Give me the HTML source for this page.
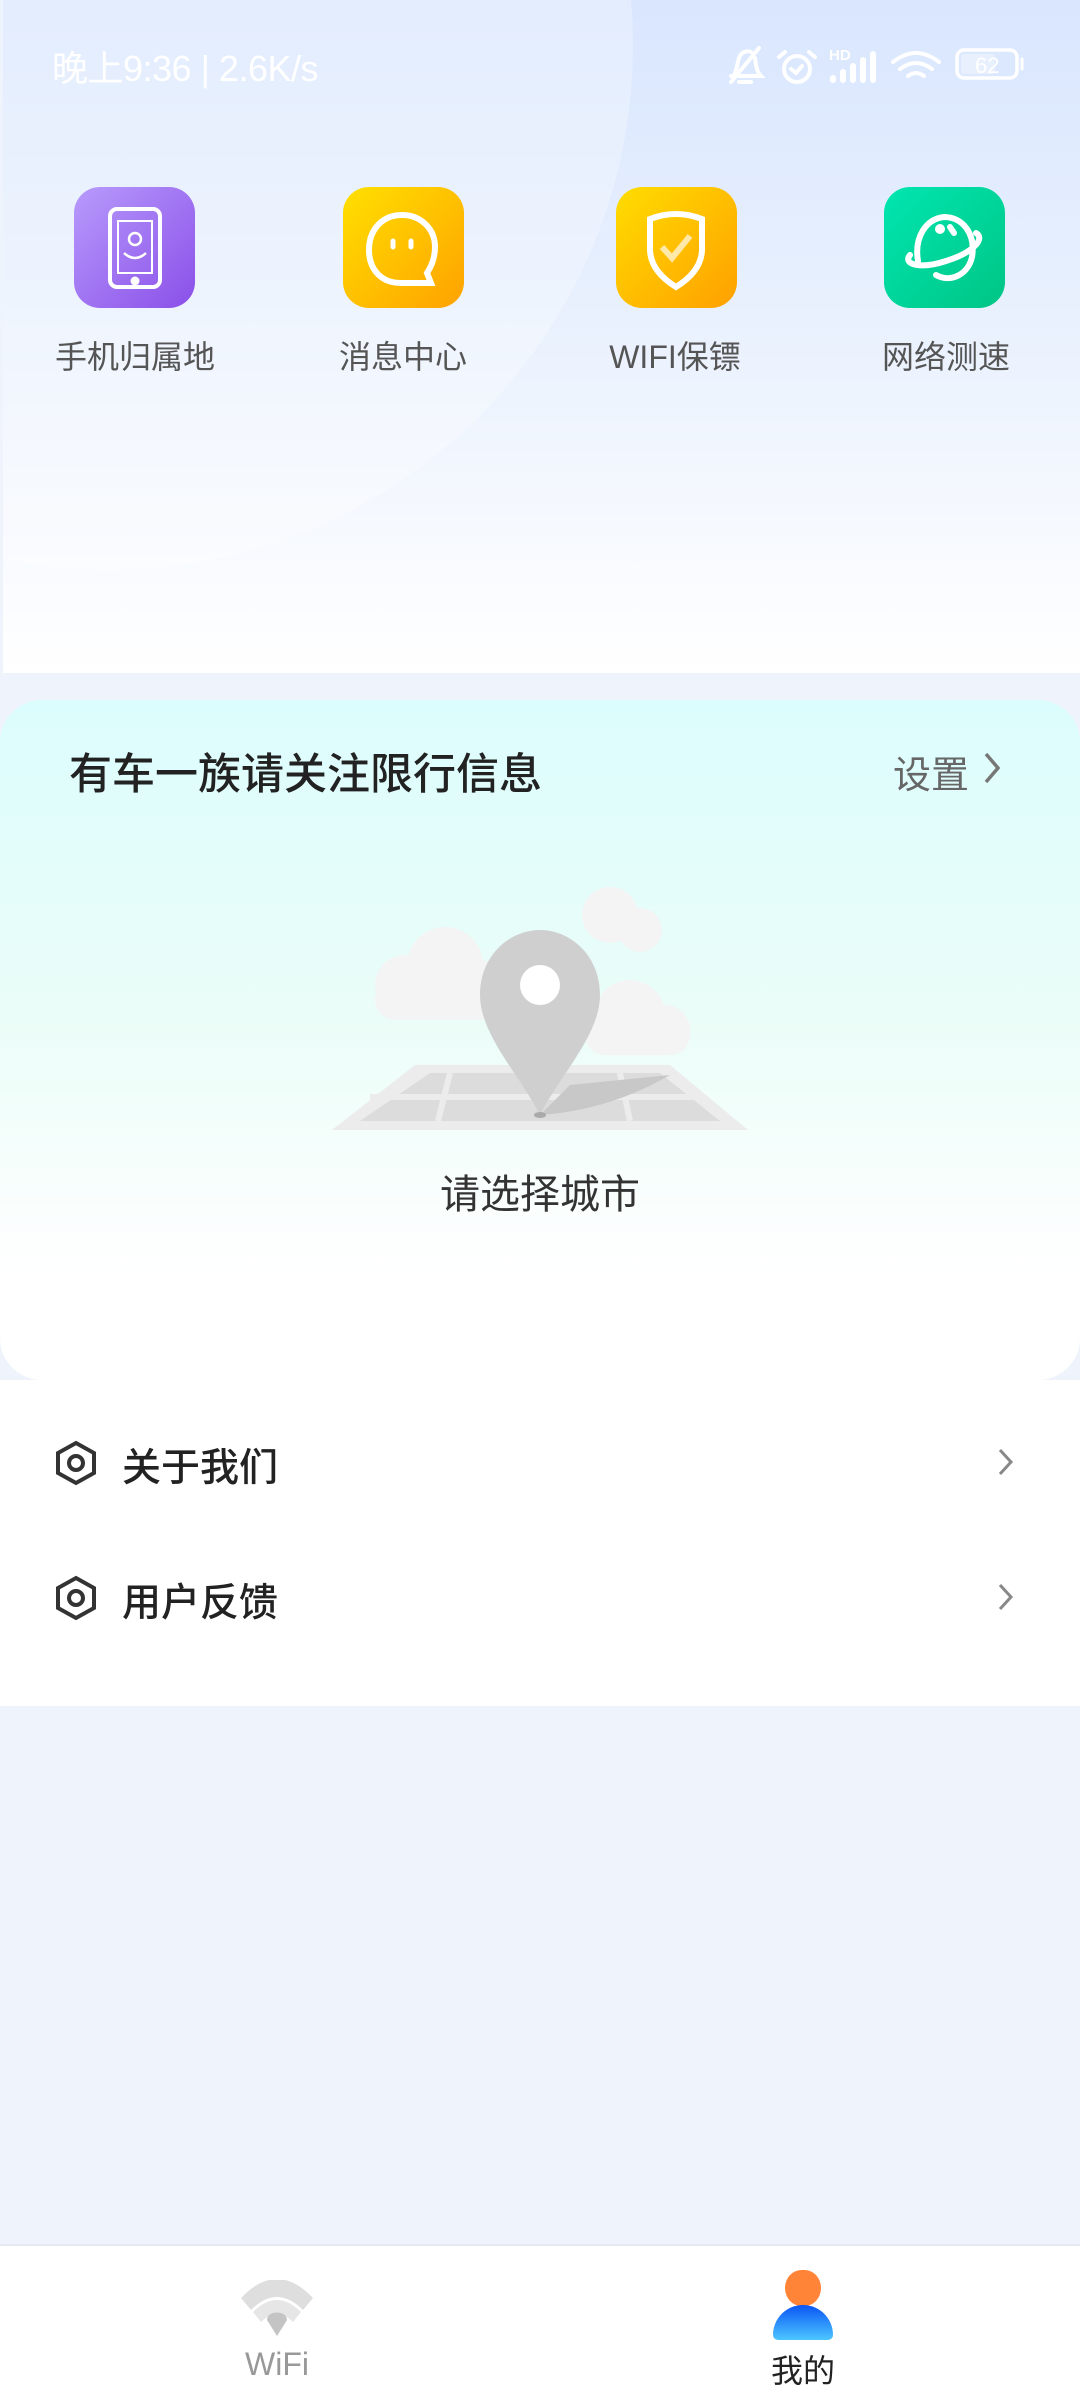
<!DOCTYPE html>
<html><head><meta charset="utf-8"><style>
*{margin:0;padding:0;box-sizing:border-box}
body{width:1080px;height:2400px;overflow:hidden;background:#eff3fb;font-family:"Liberation Sans","Noto Sans CJK SC",sans-serif;position:relative}
.top{position:absolute;left:3px;top:0;width:1077px;height:673px;background:linear-gradient(180deg,#d9e6fe 0%,#e6effe 40%,#ffffff 100%);overflow:hidden}
.circ{position:absolute;left:-420px;top:-480px;width:1050px;height:1050px;border-radius:50%;background:rgba(255,255,255,0.28)}
.st{position:absolute;left:52px;top:40px;color:#fff;font-size:36px;letter-spacing:-0.5px}
.ic{position:absolute;top:187px;width:121px;height:121px;border-radius:26px}
.lb{position:absolute;top:332px;width:220px;text-align:center;font-size:32px;color:#555}
.card{position:absolute;left:0;top:700px;width:1080px;height:680px;border-radius:42px;background:linear-gradient(180deg,#dcfdfd 0%,#eafdf8 45%,#ffffff 85%)}
.list{position:absolute;left:0;top:1380px;width:1080px;height:326px;background:#fff}
.item{position:absolute;left:0;width:1080px;height:100px}
.item span{position:absolute;left:122px;top:26px;font-size:39px;color:#222;font-weight:500}
.nav{position:absolute;left:0;top:2244px;width:1080px;height:156px;background:#fff;border-top:2px solid #e6e9ef}
</style></head><body>
<div class="top">
<div class="circ"></div>
</div>
<div class="st">晚上9:36 | 2.6K/s</div>
<svg style="position:absolute;left:725px;top:44px" width="300" height="44" viewBox="0 0 300 44" fill="none" stroke="#fff" stroke-width="4" stroke-linecap="round">
<path d="M8 32 C12 28 12 20 14 14 C16 8 22 6 26 8 M30 14 C31 22 32 28 36 32 L6 32 M14 38 h12 M6 38 L34 4"/>
<circle cx="72" cy="25" r="13"/><path d="M66 25 l5 4 6-7 M60 8 l-6 5 M84 8 l6 5"/>
<text x="104" y="16" fill="#fff" stroke="none" font-size="15" font-weight="bold" font-family="Liberation Sans">HD</text>
<path d="M108 36v-2 M118 36v-8 M128 36v-14 M138 36v-20 M148 36v-26" stroke-width="6"/>
<path d="M168 18 q23-18 46 0 M175 25 q16-12 32 0 M183 32 q8-6 16 0"/>
<rect x="232" y="6" width="60" height="28" rx="7" stroke-width="3.5"/>
<rect x="236" y="10" width="34" height="20" rx="3" fill="rgba(255,255,255,0.35)" stroke="none"/>
<text x="250" y="29" fill="#fff" stroke="none" font-size="22" font-family="Liberation Sans">62</text>
<path d="M297 15v10" stroke-width="3"/>
</svg>

<div class="ic" style="left:74px;background:linear-gradient(135deg,#b89bfc,#8a4fe8)"></div>
<svg style="position:absolute;left:74px;top:187px" width="121" height="121" viewBox="0 0 121 121" fill="none" stroke="#fff" stroke-width="4"><rect x="36" y="22" width="50" height="78" rx="7"/><rect x="44" y="34" width="34" height="52" stroke-width="2"/><circle cx="61" cy="94" r="2.5" fill="#fff"/><circle cx="61" cy="52" r="6" stroke-width="2.5"/><path d="M50 66 q11 10 22 0" stroke-width="2.5"/></svg>
<div class="ic" style="left:343px;background:linear-gradient(135deg,#ffe000,#ffa200)"></div>
<svg style="position:absolute;left:343px;top:187px" width="121" height="121" viewBox="0 0 121 121" fill="none" stroke="#fff" stroke-width="6"><path d="M58 96 C36 96 26 80 26 63 C26 42 40 28 59 28 C78 28 92 42 92 60 C92 72 88 80 84 86 L88 96 Z"/><path d="M50 54v6 M68 54v6" stroke-width="5" stroke-linecap="round"/></svg>
<div class="ic" style="left:616px;background:linear-gradient(135deg,#ffdd00,#ffa000)"></div>
<svg style="position:absolute;left:616px;top:187px" width="121" height="121" viewBox="0 0 121 121" fill="none" stroke="#fff" stroke-width="6"><path d="M34 32 q26-10 52 0 v30 c0 16-10 28-26 38 c-16-10-26-22-26-38z"/><path d="M46 60 l10 11 18-22" stroke="#ffe9a8"/></svg>
<div class="ic" style="left:884px;background:linear-gradient(135deg,#00e6b0,#00c585)"></div>
<svg style="position:absolute;left:884px;top:187px" width="121" height="121" viewBox="0 0 121 121" fill="none" stroke="#fff" stroke-width="6" stroke-linecap="round"><path d="M34 74 C30 50 42 32 60 30 C78 30 92 46 88 70 C84 88 66 96 52 88"/><path d="M26 68 c-8 10 12 14 36 6 c26-8 40-22 30-28"/><circle cx="56" cy="42" r="2" fill="#fff"/><path d="M66 40 l4 6"/></svg>

<div class="lb" style="left:25px">手机归属地</div>
<div class="lb" style="left:293px">消息中心</div>
<div class="lb" style="left:565px">WIFI保镖</div>
<div class="lb" style="left:836px">网络测速</div>

<div class="card">
<div style="position:absolute;left:69px;top:40px;font-size:43px;color:#222;font-weight:500">有车一族请关注限行信息</div>
<div style="position:absolute;left:893px;top:44px;font-size:38px;color:#666">设置</div>
<svg style="position:absolute;left:980px;top:48px" width="26" height="40" viewBox="0 0 26 40" fill="none" stroke="#777" stroke-width="3.5"><path d="M6 6 l12 14 -12 14"/></svg>
<svg style="position:absolute;left:330px;top:185px" width="420" height="260" viewBox="0 0 420 260">
<g fill="#f4f4f4"><circle cx="115" cy="80" r="38"/><circle cx="75" cy="100" r="30"/><circle cx="150" cy="100" r="25"/><rect x="45" y="95" width="130" height="40" rx="20"/>
<circle cx="280" cy="30" r="28"/><circle cx="310" cy="45" r="22"/><circle cx="300" cy="130" r="35"/><circle cx="335" cy="145" r="25"/><rect x="255" y="130" width="105" height="40" rx="20"/></g>
<path d="M2 245 L85 180 L340 180 L418 245 Z" fill="#ececec"/>
<path d="M30 236 L100 188 L330 188 L390 236 Z" fill="#dcdcdc"/>
<path d="M40 212 L370 212 M120 188 L108 236 M290 188 L300 236" stroke="#ececec" stroke-width="6"/>
<path d="M210 230 Q280 225 340 190 L240 200 Z" fill="#c8c8c8"/>
<path d="M210 230 C190 190 150 150 150 110 C150 70 180 45 210 45 C240 45 270 70 270 110 C270 150 230 190 210 230Z" fill="#cfcfcf"/>
<circle cx="210" cy="100" r="20" fill="#fff"/>
<ellipse cx="210" cy="230" rx="6" ry="3" fill="#aaa"/>
</svg>
<div style="position:absolute;left:0;width:1080px;top:462px;text-align:center;font-size:40px;color:#333">请选择城市</div>
</div>

<div class="list">
<div class="item" style="top:31px">
<svg style="position:absolute;left:54px;top:29px" width="44" height="46" viewBox="0 0 44 46" fill="none" stroke="#333" stroke-width="4"><path d="M22 3 L40 13 V33 L22 43 L4 33 V13 Z"/><circle cx="22" cy="23" r="7"/></svg>
<span>关于我们</span>
<svg style="position:absolute;left:995px;top:35px" width="22" height="32" viewBox="0 0 22 32" fill="none" stroke="#888" stroke-width="3"><path d="M5 4 l11 12 -11 12"/></svg>
</div>
<div class="item" style="top:166px">
<svg style="position:absolute;left:54px;top:29px" width="44" height="46" viewBox="0 0 44 46" fill="none" stroke="#333" stroke-width="4"><path d="M22 3 L40 13 V33 L22 43 L4 33 V13 Z"/><circle cx="22" cy="23" r="7"/></svg>
<span>用户反馈</span>
<svg style="position:absolute;left:995px;top:35px" width="22" height="32" viewBox="0 0 22 32" fill="none" stroke="#888" stroke-width="3"><path d="M5 4 l11 12 -11 12"/></svg>
</div>
</div>

<div class="nav">
<svg style="position:absolute;left:241px;top:34px" width="72" height="56" viewBox="0 0 72 56"><path d="M0 18 Q36 -20 72 18 L62 30 Q36 4 10 30 Z" fill="#dedede"/><path d="M12 32 Q36 8 60 32 L52 42 Q36 26 20 42Z" fill="#e6e6e6"/><path d="M36 56 L26 40 C26 30 46 30 46 40 Z" fill="#c4c4c4"/></svg>
<div style="position:absolute;left:177px;width:200px;text-align:center;top:100px;font-size:32px;color:#999">WiFi</div>
<div style="position:absolute;left:785px;top:24px;width:36px;height:36px;border-radius:50%/55%;background:#ff8438"></div>
<div style="position:absolute;left:773px;top:59px;width:60px;height:35px;border-radius:30px 30px 5px 5px;background:linear-gradient(180deg,#0a55f5,#4cc7ff)"></div>
<div style="position:absolute;left:703px;width:200px;text-align:center;top:100px;font-size:32px;color:#222">我的</div>
</div>
</body></html>
